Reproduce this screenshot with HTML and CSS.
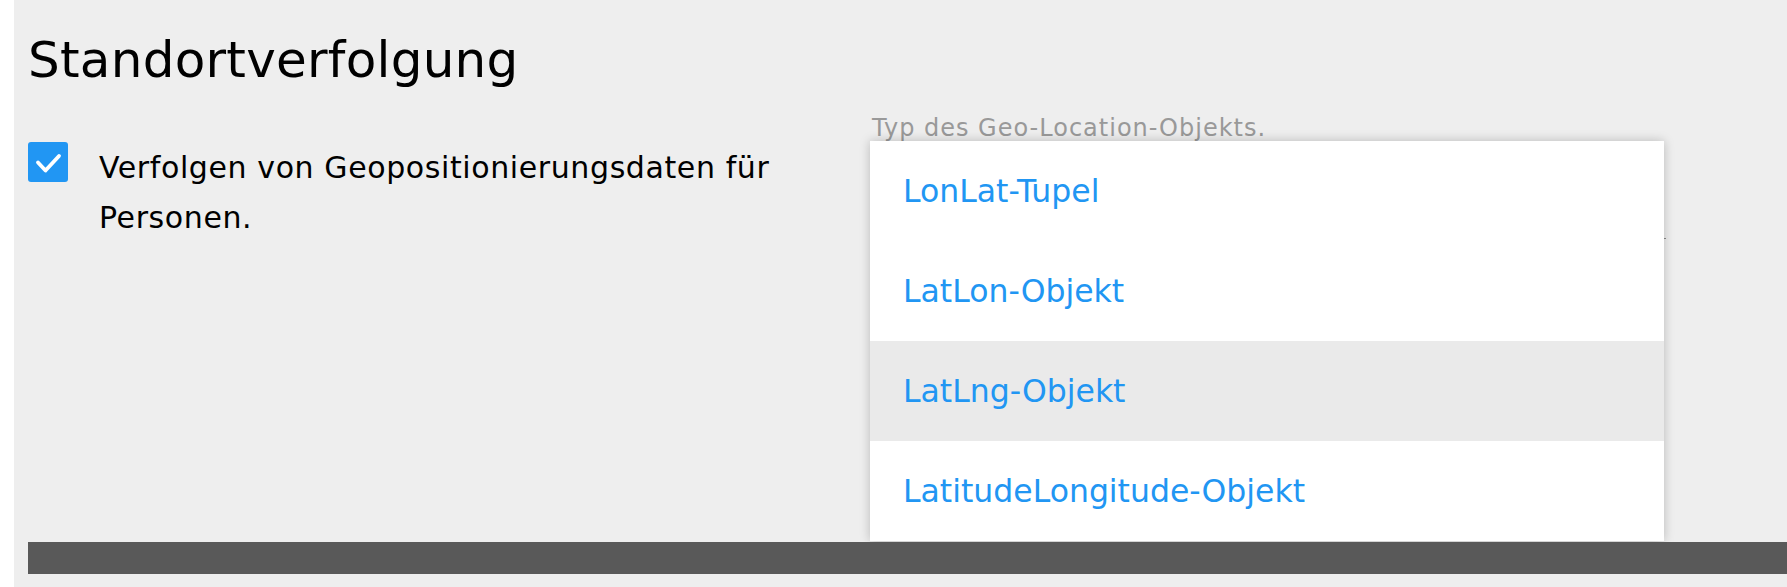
FILE: index.html
```html
<!DOCTYPE html>
<html lang="de">
<head>
<meta charset="utf-8">
<title>Standortverfolgung</title>
<link rel="stylesheet" href="styles.css">
</head>
<body>
<main class="panel">
  <h1 class="title">Standortverfolgung</h1>
  <div class="row">
    <label class="check">
      <span class="box">
        <svg viewBox="0 0 40 40" width="40" height="40" aria-hidden="true">
          <polyline points="10,20.5 17.5,28.5 31,14" fill="none" stroke="#fff" stroke-width="3.8" stroke-linecap="round" stroke-linejoin="round"/>
        </svg>
      </span>
      <span class="check-label">Verfolgen von Geopositionierungsdaten für Personen.</span>
    </label>
    <div class="field">
      <div class="hint">Typ des Geo-Location-Objekts.</div>
      <div class="select">
        <ul class="menu">
          <li class="item">LonLat-Tupel</li>
          <li class="item">LatLon-Objekt</li>
          <li class="item active">LatLng-Objekt</li>
          <li class="item">LatitudeLongitude-Objekt</li>
        </ul>
      </div>
    </div>
  </div>
  <div class="bar"></div>
</main>
</body>
</html>
```
FILE: styles.css
```css
html, body {
  margin: 0;
  padding: 0;
  background: #ffffff;
  height: 100%;
  overflow: hidden;
}
body {
  display: flex;
  font-family: "DejaVu Sans", Verdana, sans-serif;
}
.panel {
  flex: 1;
  margin-left: 14px;
  min-height: 100vh;
  background: #eeeeee;
  padding: 30px 0 0 14px;
  box-sizing: border-box;
}
.title {
  margin: 0;
  font-size: 50px;
  line-height: 60px;
  font-weight: normal;
  color: #000;
  letter-spacing: 0.25px;
}
.row {
  display: flex;
  align-items: flex-start;
  margin-top: 21px;
  height: 132px;
}
.check {
  display: flex;
  align-items: flex-start;
  width: 842px;
  padding-top: 31px;
  box-sizing: border-box;
}
.box {
  flex: none;
  width: 40px;
  height: 40px;
  border-radius: 3px;
  background: #2196f3;
  display: block;
}
.box svg { display: block; }
.check-label {
  margin-left: 31px;
  width: 720px;
  font-size: 30px;
  line-height: 50px;
  margin-top: 1px;
  letter-spacing: 0.6px;
  color: #000;
}
.field {
  width: 796px;
}
.hint {
  font-size: 24px;
  line-height: 26px;
  padding-top: 4px;
  color: #999999;
  letter-spacing: 1px;
  padding-left: 2px;
}
.select {
  position: relative;
  height: 97px;
  border-bottom: 1px solid #8a8a8a;
}
.menu {
  position: absolute;
  top: 0;
  left: 0;
  width: 794px;
  margin: 0;
  padding: 0;
  list-style: none;
  background: #ffffff;
  box-shadow: 0 0 10px rgba(0, 0, 0, 0.22);
  z-index: 2;
}
.item {
  height: 100px;
  line-height: 100px;
  padding-left: 33px;
  font-size: 31.5px;
  color: #2196f3;
}
.item.active {
  background: #eaeaea;
}
.bar {
  position: relative;
  z-index: 3;
  margin-top: 299px;
  height: 32px;
  background: #595959;
}
```
